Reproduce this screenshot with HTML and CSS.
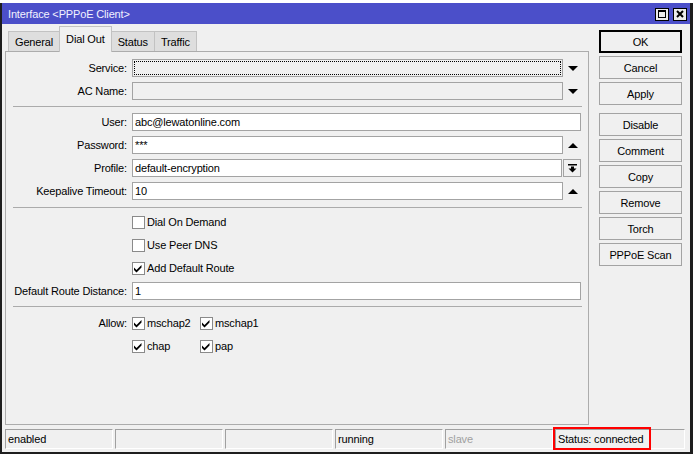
FILE: index.html
```html
<!DOCTYPE html>
<html>
<head>
<meta charset="utf-8">
<title>Interface &lt;PPPoE Client&gt;</title>
<link rel="stylesheet" href="styles.css">
</head>
<body>
<div class="window">
  <div class="titlebar">
    <span class="title">Interface &lt;PPPoE Client&gt;</span>
    <div class="tb-btns">
      <span class="tb-btn"><svg width="12" height="11" viewBox="0 0 12 11"><rect x="2.5" y="1.5" width="7" height="7" fill="none" stroke="#000"/><rect x="2" y="1" width="8" height="2" fill="#000"/></svg></span>
      <span class="tb-btn"><svg width="12" height="11" viewBox="0 0 12 11"><path d="M3 2 L9 8 M9 2 L3 8" stroke="#000" stroke-width="2" fill="none"/></svg></span>
    </div>
  </div>
  <div class="main">
    <div class="left">
      <div class="tabs">
        <div class="tab">General</div>
        <div class="tab active">Dial Out</div>
        <div class="tab">Status</div>
        <div class="tab">Traffic</div>
      </div>
      <div class="panel">
        <div class="group g1">
          <div class="row"><span class="lbl">Service:</span><div class="fld"><div class="input off focus"></div><span class="arrow"><svg width="10" height="5" viewBox="0 0 10 5"><polygon points="0,0 10,0 5,5" fill="#000"/></svg></span></div></div>
          <div class="row"><span class="lbl">AC Name:</span><div class="fld"><div class="input off"></div><span class="arrow"><svg width="10" height="5" viewBox="0 0 10 5"><polygon points="0,0 10,0 5,5" fill="#000"/></svg></span></div></div>
        </div>
        <div class="sep"></div>
        <div class="group g2">
          <div class="row"><span class="lbl">User:</span><div class="fld"><div class="input">abc@lewatonline.com</div></div></div>
          <div class="row"><span class="lbl">Password:</span><div class="fld"><div class="input">***</div><span class="arrow"><svg width="10" height="5" viewBox="0 0 10 5"><polygon points="0,5 10,5 5,0" fill="#000"/></svg></span></div></div>
          <div class="row"><span class="lbl">Profile:</span><div class="fld"><div class="input wide1">default-encryption</div><span class="spin"><svg width="9" height="9" viewBox="0 0 9 9"><rect x="0" y="0" width="9" height="1.5" fill="#000"/><rect x="3" y="2.5" width="3" height="2.5" fill="#000"/><polygon points="0.5,4.5 8.5,4.5 4.5,8.5" fill="#000"/></svg></span></div></div>
          <div class="row"><span class="lbl">Keepalive Timeout:</span><div class="fld"><div class="input">10</div><span class="arrow"><svg width="10" height="5" viewBox="0 0 10 5"><polygon points="0,5 10,5 5,0" fill="#000"/></svg></span></div></div>
        </div>
        <div class="sep"></div>
        <div class="group g3">
          <div class="row"><span class="lbl"></span><div class="fld"><span class="cb-item"><span class="cb"></span>Dial On Demand</span></div></div>
          <div class="row"><span class="lbl"></span><div class="fld"><span class="cb-item"><span class="cb"></span>Use Peer DNS</span></div></div>
          <div class="row"><span class="lbl"></span><div class="fld"><span class="cb-item"><span class="cb"><svg width="11" height="11" viewBox="0 0 11 11"><polygon points="1,4.5 3.5,7 8.5,2 8.5,4.5 3.5,9.5 1,7" fill="#000"/></svg></span>Add Default Route</span></div></div>
          <div class="row"><span class="lbl">Default Route Distance:</span><div class="fld"><div class="input">1</div></div></div>
        </div>
        <div class="sep"></div>
        <div class="group g4">
          <div class="row"><span class="lbl">Allow:</span><div class="fld"><span class="cb-item w"><span class="cb"><svg width="11" height="11" viewBox="0 0 11 11"><polygon points="1,4.5 3.5,7 8.5,2 8.5,4.5 3.5,9.5 1,7" fill="#000"/></svg></span>mschap2</span><span class="cb-item"><span class="cb"><svg width="11" height="11" viewBox="0 0 11 11"><polygon points="1,4.5 3.5,7 8.5,2 8.5,4.5 3.5,9.5 1,7" fill="#000"/></svg></span>mschap1</span></div></div>
          <div class="row"><span class="lbl"></span><div class="fld"><span class="cb-item w"><span class="cb"><svg width="11" height="11" viewBox="0 0 11 11"><polygon points="1,4.5 3.5,7 8.5,2 8.5,4.5 3.5,9.5 1,7" fill="#000"/></svg></span>chap</span><span class="cb-item"><span class="cb"><svg width="11" height="11" viewBox="0 0 11 11"><polygon points="1,4.5 3.5,7 8.5,2 8.5,4.5 3.5,9.5 1,7" fill="#000"/></svg></span>pap</span></div></div>
        </div>
      </div>
    </div>
    <div class="btns">
      <div class="btn ok">OK</div>
      <div class="btn">Cancel</div>
      <div class="btn">Apply</div>
      <div class="btn spaced">Disable</div>
      <div class="btn">Comment</div>
      <div class="btn">Copy</div>
      <div class="btn">Remove</div>
      <div class="btn">Torch</div>
      <div class="btn">PPPoE Scan</div>
    </div>
  </div>
  <div class="statusbar">
    <div class="cell">enabled</div>
    <div class="cell"></div>
    <div class="cell"></div>
    <div class="cell">running</div>
    <div class="cell dim">slave</div>
    <div class="cell last">Status: connected<span class="mark"></span></div>
  </div>
</div>
</body>
</html>
```
FILE: styles.css
```css
* { box-sizing: border-box; }
html, body { margin: 0; height: 454px; overflow: hidden; }
body {
  background: #ffffff;
  font-family: "Liberation Sans", Arial, sans-serif;
  font-size: 11px;
  letter-spacing: -0.15px;
  color: #000;
}
.window {
  margin-top: 3px;
  height: 451px;
  background: #f0f0f0;
  border-left: 2px solid #1e1e1e;
  border-right: 3px solid #1e1e1e;
  border-bottom: 2px solid #1e1e1e;
  display: flex;
  flex-direction: column;
}
.titlebar {
  height: 21px;
  flex: none;
  background: #4b4fc9;
  color: #f2f2ff;
  display: flex;
  justify-content: space-between;
  padding: 0 3px 0 6px;
}
.title { padding-top: 4px; line-height: 14px; }
.tb-btns { display: flex; gap: 4px; margin-top: 5px; }
.tb-btn {
  width: 14px; height: 13px;
  border: 1px solid #000;
  background: #ececec;
  display: flex; align-items: center; justify-content: center;
}
.tb-btn svg { display: block; }
.main { display: flex; height: 401px; flex: none; }
.left { margin-left: 3px; width: 584px; display: flex; flex-direction: column; }
.tabs {
  display: flex; align-items: flex-end;
  height: 26px; margin-top: 2px; margin-bottom: -1px;
  padding-left: 3px; position: relative; z-index: 1;
}
.tab {
  height: 20px; margin-bottom: 1px;
  padding: 0 6px;
  border: 1px solid #c2c2c2; border-bottom: none;
  background: #dedede;
  display: flex; align-items: center;
}
.tab + .tab { margin-left: -1px; }
.tab.active {
  height: 26px; margin-bottom: 0;
  background: #f0f0f0;
  align-items: flex-start; padding-top: 6px;
  position: relative;
}
.panel {
  height: 374px;
  border: 1px solid #acacac;
  padding-top: 7px;
}
.group { display: flex; flex-direction: column; gap: 5px; }
.g1 { padding-bottom: 6px; }
.g2 { padding: 6px 0 7px; }
.g3 { padding: 5px 0 6px; }
.g4 { padding-top: 7px; }
.sep { height: 1px; background: #ababab; margin: 0 6px 0 7px; }
.row {
  display: grid;
  grid-template-columns: 121px 449px;
  column-gap: 5px;
  height: 18px;
  align-items: center;
}
.lbl { text-align: right; white-space: nowrap; }
.fld { display: flex; height: 18px; align-items: center; }
.input {
  flex: 1; height: 18px;
  border: 1px solid #a3a3a3;
  background: #fff;
  padding-left: 2px;
  line-height: 16px;
  white-space: nowrap; overflow: hidden;
}
.input.off { background: #f0f0f0; }
.input.focus { outline: 1px dotted #000; outline-offset: -3px; }
.arrow { width: 18px; height: 18px; display: flex; align-items: center; justify-content: center; padding-left: 2px; }
.arrow svg, .spin svg, .cb svg { display: block; }
.spin {
  width: 18px; height: 18px; margin-left: 1px;
  border: 1px solid #a3a3a3;
  background: #f0f0f0;
  display: flex; align-items: center; justify-content: center;
}
.cb-item { display: flex; align-items: center; gap: 2px; }
.cb-item.w { width: 68px; }
.cb {
  width: 13px; height: 13px;
  border: 1px solid #8a8a8a;
  background: #fff;
  display: flex; align-items: center; justify-content: center;
}
.btns {
  margin-left: 10px; width: 83px;
  padding-top: 6px;
  display: flex; flex-direction: column; gap: 3px;
}
.btn {
  height: 23px;
  border: 1px solid #a3a3a3;
  background: #f0f0f0;
  display: flex; align-items: center; justify-content: center;
}
.btn.ok { border: 2px solid #000; }
.btn.spaced { margin-top: 5px; }
.statusbar {
  display: flex; gap: 2px;
  padding: 4px 0 3px 3px;
  height: 27px; flex: none;
}
.cell {
  width: 108px; height: 20px;
  border: 1px solid;
  border-color: #a0a0a0 #ffffff #ffffff #a0a0a0;
  padding-left: 2px;
  display: flex; align-items: center;
  white-space: nowrap;
  position: relative;
}
.cell.dim { color: #a0a0a0; }
.cell.last { width: 130px; }
.mark {
  position: absolute;
  left: -3px; top: -3px;
  width: 98px; height: 23px;
  border: 2px solid #ff0000;
}
```
